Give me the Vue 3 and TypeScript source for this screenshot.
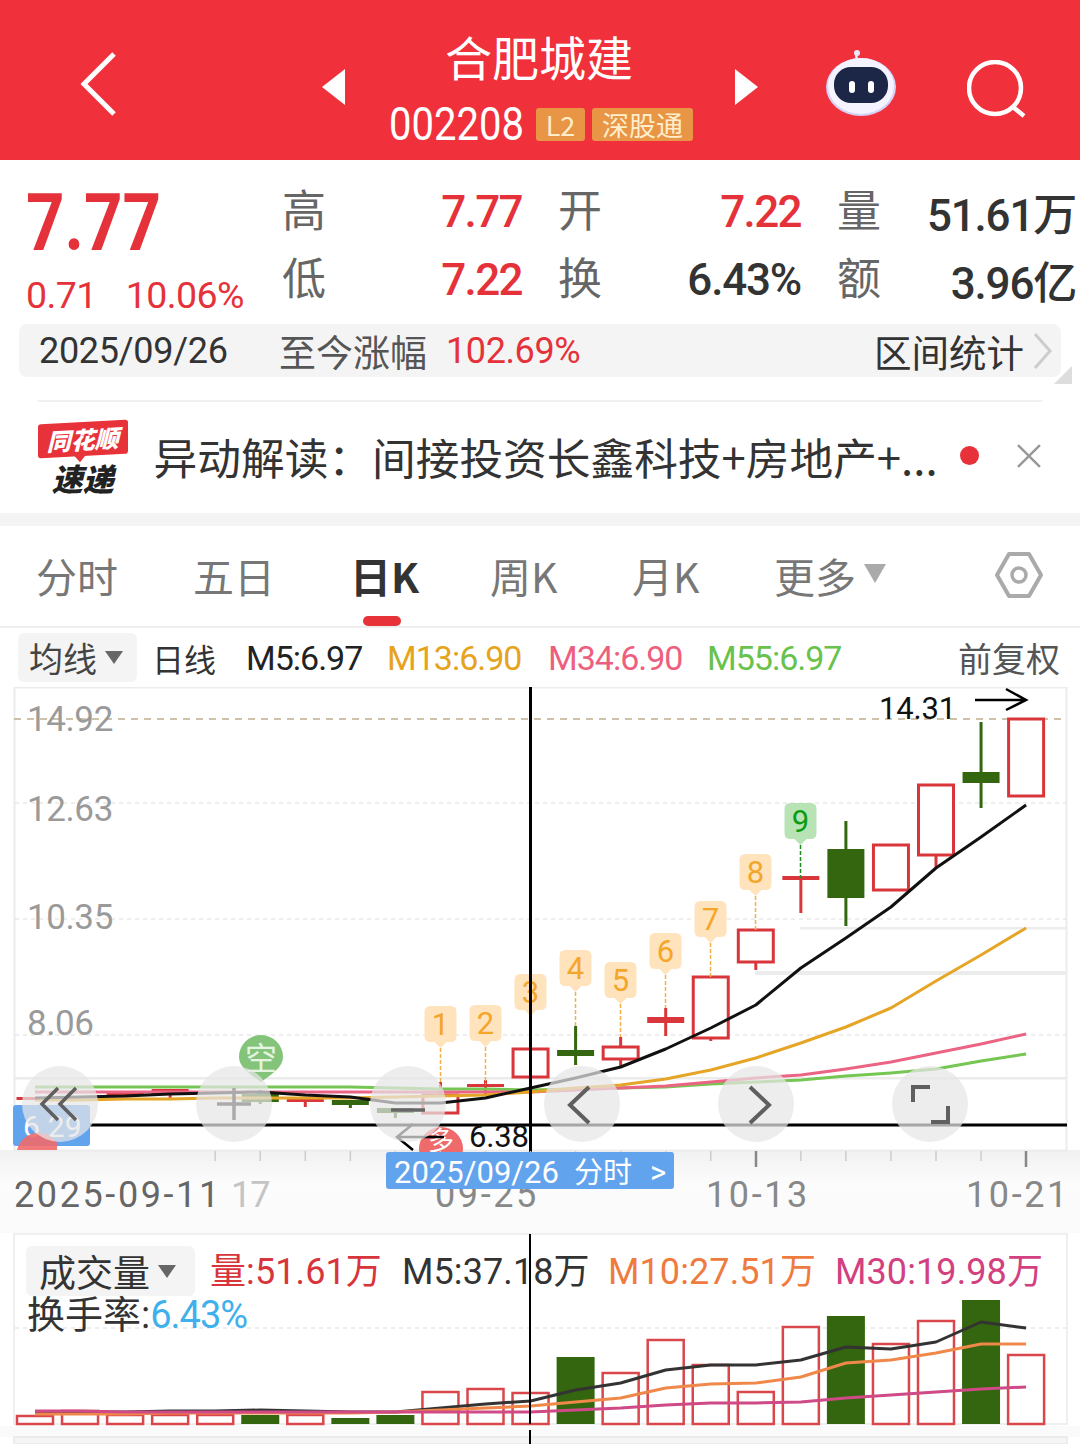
<template>
  <div class="page">
    <header class="top">
      <div class="top-left">
        <svg class="back" width="40" height="66" viewBox="0 0 40 66"><path d="M34 3 4 33l30 30" fill="none" stroke="#fff" stroke-width="5" /></svg>
        <span class="tri tri-left" />
      </div>
      <div class="top-title">
        <div class="name">合肥城建</div>
        <div class="code-row">
          <span class="code"><span class="code-num">002208</span></span>
          <span class="tag tag-l2">L2</span>
          <span class="tag tag-hk">深股通</span>
        </div>
      </div>
      <div class="top-right">
        <span class="tri tri-right" />
        <svg class="robot" width="72" height="68" viewBox="0 0 72 68">
          <path d="M33 14c-1-5-3-7-1-10" fill="none" stroke="#e9e6fb" stroke-width="2.5" />
          <circle cx="32" cy="4" r="3" fill="#e9e6fb" />
          <ellipse cx="36" cy="38" rx="35" ry="29" fill="#d4d2f6" />
          <ellipse cx="36" cy="37" rx="33" ry="28" fill="#f4f3ff" />
          <rect x="9" y="18" width="54" height="36" rx="17" fill="#1c2748" />
          <rect x="24" y="32" width="6" height="12" rx="3" fill="#fff" />
          <rect x="43" y="32" width="6" height="12" rx="3" fill="#fff" />
        </svg>
        <svg class="search" width="60" height="58" viewBox="0 0 60 58">
          <circle cx="28" cy="28" r="26" fill="none" stroke="#fff" stroke-width="4.5" />
          <path d="M46 47l11 9" fill="none" stroke="#fff" stroke-width="4.5" />
        </svg>
      </div>
    </header>

    <section class="quote">
      <div class="quote-main">
        <div class="price">7.77</div>
        <div class="change"><span>0.71</span><span>10.06%</span></div>
      </div>
      <div class="stats">
        <div v-for="s in stats" :key="s.label" class="stat">
          <span class="stat-label">{{ s.label }}</span>
          <span class="stat-value" :class="{ red: s.red }">{{ s.value }}</span>
        </div>
      </div>
    </section>

    <div class="range">
      <span class="range-date">2025/09/26</span>
      <span class="range-label">至今涨幅</span>
      <span class="range-pct">102.69%</span>
      <span class="range-link">区间统计</span>
      <svg width="20" height="38" viewBox="0 0 20 38"><path d="M2 2l15 17L2 36" fill="none" stroke="#ccc" stroke-width="3" /></svg>
      <span class="range-corner" />
    </div>

    <div class="news">
      <div class="logo">
        <div class="logo-top">同花顺</div>
        <div class="logo-bottom">速递</div>
      </div>
      <div class="news-text">异动解读：间接投资长鑫科技+房地产+...</div>
      <span class="news-dot" />
      <svg width="26" height="26" viewBox="0 0 26 26"><path d="M2 2l22 22M24 2 2 24" stroke="#999" stroke-width="2.5" /></svg>
    </div>

    <div class="gap" />

    <nav class="tabs">
      <span v-for="t in tabs" :key="t.label" class="tab" :class="{ active: t.active }" :style="{ width: t.width + 'px' }">{{ t.label }}</span>
      <span class="caret" />
      <svg class="hex" width="48" height="48" viewBox="0 0 48 48">
        <path d="M14 3h20l12 21-12 21H14L2 24z" fill="none" stroke="#aaa" stroke-width="4" stroke-linejoin="round" />
        <circle cx="24" cy="24" r="7" fill="none" stroke="#aaa" stroke-width="3.5" />
      </svg>
      <span class="tab-bar" />
    </nav>

    <div class="legend">
      <div class="legend-btn">均线<span class="small-caret" /></div>
      <span class="legend-day">日线</span>
      <span v-for="m in maLegend" :key="m.text" class="legend-ma" :style="{ color: m.color, width: m.width + 'px' }">{{ m.text }}</span>
      <span class="legend-adj">前复权</span>
    </div>

    <svg class="chart" width="1080" height="546" viewBox="0 687 1080 546">
      <defs>
        <linearGradient id="axisFade" x1="0" y1="0" x2="0" y2="1">
          <stop offset="0" stop-color="#f1f1f1" />
          <stop offset="0.4" stop-color="#fcfcfc" />
          <stop offset="1" stop-color="#fafafa" />
        </linearGradient>
      </defs>
      <rect x="0" y="1150" width="1080" height="83" fill="url(#axisFade)" />
      <rect x="14.5" y="687.5" width="1052" height="463" fill="#fff" stroke="#ececec" stroke-width="2" />

      <line x1="14" y1="719" x2="1066" y2="719" stroke="#bfae8c" stroke-width="1.5" stroke-dasharray="7 6" />
      <line v-for="y in [803, 919, 1035]" :key="y" x1="15" :y1="y" x2="1066" :y2="y" stroke="#ddd" stroke-width="1" stroke-dasharray="4 4" />
      <rect x="800" y="927" width="267" height="2.5" fill="#ececec" />
      <rect x="755" y="971" width="312" height="4" fill="#ececec" />
      <rect x="15" y="1077" width="1052" height="2.5" fill="#ececec" />

      <text v-for="a in priceAxis" :key="a.text" class="axis-price" x="27" :y="a.y">{{ a.text }}</text>

      <g v-for="c in candles" :key="c.i">
        <line :x1="cx(c.i)" :y1="c.wickTop" :x2="cx(c.i)" :y2="c.wickBottom" :stroke="candleColor(c)" stroke-width="3" />
        <rect v-if="c.hollow" :x="cx(c.i) - 17.5" :y="c.top" width="35" :height="c.bottom - c.top" fill="#fff" :stroke="candleColor(c)" stroke-width="3" />
        <rect v-else :x="cx(c.i) - 18.5" :y="c.top" width="37" :height="c.bottom - c.top" :fill="candleColor(c)" />
      </g>

      <polyline v-for="m in maLines" :key="m.color" :points="linePoints(m.points)" fill="none" :stroke="m.color" stroke-width="3" stroke-linejoin="round" />

      <g v-for="b in badges" :key="b.text">
        <line :x1="b.cx" :y1="b.y + 42" :x2="b.cx" :y2="b.stemTo" :stroke="b.green ? '#1f8a1f' : '#f2b04a'" stroke-width="1.5" stroke-dasharray="4 2" />
        <path :d="badgePath(b.cx, b.y)" :fill="b.green ? '#b8e3b4' : '#ffe3bd'" />
        <text class="badge-num" :x="b.cx" :y="b.y + 29" :fill="b.green ? '#0a9c12' : '#f4a62a'">{{ b.text }}</text>
      </g>

      <path d="M239 1057a22 22 0 1 1 44 0c0 10-11 17-22 25-11-8-22-15-22-25z" fill="#83c47a" />
      <text class="flag-text" x="261" y="1070">空</text>

      <rect x="13" y="1105" width="77" height="41" rx="3" fill="#62a3ee" />
      <text class="tag-price" x="23" y="1137">6.29</text>
      <path d="M17 1150a22 22 0 0 1 40 -7v7z" fill="#ef6a6a" opacity="0.9" />
      <circle cx="441" cy="1149" r="22" fill="#ef6a6a" />
      <text class="flag-text flag-small" x="441" y="1150">多</text>

      <line x1="90" y1="1125" x2="1067" y2="1125" stroke="#000" stroke-width="3" />
      <path d="M444 1137h-46m15-13-16 13 16 13" fill="none" stroke="#000" stroke-width="2.5" />
      <text class="hi-lo" x="469" y="1147">6.38</text>
      <text class="hi-lo" x="879" y="719">14.31</text>
      <path d="M975 700h50m-19-11 20 11-20 10" fill="none" stroke="#000" stroke-width="2.5" />

      <line x1="530.5" y1="687" x2="530.5" y2="1152" stroke="#000" stroke-width="3" />

      <g v-for="x in [60, 234, 408, 582, 756, 930]" :key="x">
        <circle :cx="x" cy="1104" r="38" fill="#e6e6e6" opacity="0.72" />
      </g>
      <g fill="none" stroke="#5f5f5f" stroke-width="3.5">
        <path d="M58 1088l-16 16 16 16M76 1088l-16 16 16 16" />
        <path d="M217 1104h34M234 1088v32" stroke="#aaa" />
        <path d="M391 1110h34" stroke="#666" />
        <path d="M589 1087l-19 18 19 18" stroke-width="4" />
        <path d="M750 1087l19 18-19 18" stroke-width="4" />
        <path d="M913 1102v-15h17M948 1106v16h-17" stroke-width="4" />
      </g>

      <line v-for="i in tickIdx" :key="i" :x1="cx(i)" y1="1151" :x2="cx(i)" y2="1161" stroke="#ccc" stroke-width="1.5" />
      <line v-for="x in [756, 1026]" :key="x" :x1="x" y1="1151" :x2="x" y2="1167" stroke="#888" stroke-width="2.5" />

      <text class="axis-date" x="14" y="1207" fill="#666">2025-09-11</text>
      <text class="axis-date axis-date-short" x="231" y="1207" fill="#c4c4c4">17</text>
      <text class="axis-date" x="435" y="1207" fill="#888">09-25</text>
      <text class="axis-date" x="706" y="1207" fill="#888">10-13</text>
      <text class="axis-date" x="966" y="1207" fill="#888">10-21</text>

      <rect x="386" y="1152" width="288" height="37" rx="3" fill="#62a3ee" />
      <text class="date-tag" x="394" y="1183">2025/09/26</text>
      <text class="date-tag date-tag-cn" x="574" y="1183">分时</text>
      <text class="date-tag" x="650" y="1183">&gt;</text>
    </svg>

    <section class="volume">
      <svg class="volume-chart" width="1080" height="211" viewBox="0 1233 1080 211">
        <rect x="14" y="1234" width="1053" height="190" fill="#fff" stroke="#efefef" stroke-width="2" />
        <rect x="0" y="1426" width="1080" height="11" fill="#fafafa" />
        <rect x="14" y="1437" width="1053" height="7" fill="#f5f5f5" stroke="#e8e8e8" stroke-width="1.5" />
        <line x1="15" y1="1328" x2="1066" y2="1328" stroke="#ddd" stroke-dasharray="4 4" />
        <template v-for="(b, i) in volBars" :key="i">
          <rect v-if="b.down" :x="cx(i) - 19" :y="b.top" width="38" :height="1424 - b.top" fill="#33660f" />
          <rect v-else :x="cx(i) - 18" :y="b.top" width="36" :height="1424 - b.top" fill="#fff" stroke="#d9474c" stroke-width="2.5" />
        </template>
        <polyline v-for="m in volLines" :key="m.color" :points="linePoints(m.points)" fill="none" :stroke="m.color" stroke-width="3" stroke-linejoin="round" />
        <line x1="530" y1="1234" x2="530" y2="1424" stroke="#000" stroke-width="2" />
        <line x1="530" y1="1430" x2="530" y2="1444" stroke="#000" stroke-width="2" />
      </svg>
      <div class="vol-btn">成交量<span class="small-caret" /></div>
      <div class="vol-legend">
        <span v-for="v in volLegend" :key="v.text" :style="{ color: v.color, width: v.width + 'px' }">{{ v.text }}</span>
      </div>
      <div class="turnover">换手率:<span>6.43%</span></div>
    </section>
  </div>
</template>

<script setup lang="ts">
interface Candle {
  i: number
  top: number
  bottom: number
  wickTop: number
  wickBottom: number
  down?: boolean
  hollow?: boolean
}

interface Badge {
  text: string
  cx: number
  y: number
  stemTo: number
  green?: boolean
}

const stats = [
  { label: '高', value: '7.77', red: true },
  { label: '开', value: '7.22', red: true },
  { label: '量', value: '51.61万' },
  { label: '低', value: '7.22', red: true },
  { label: '换', value: '6.43%' },
  { label: '额', value: '3.96亿' },
]

const tabs = [
  { label: '分时', width: 157 },
  { label: '五日', width: 157 },
  { label: '日K', width: 140, active: true },
  { label: '周K', width: 142 },
  { label: '月K', width: 142 },
  { label: '更多', width: 90 },
]

const maLegend = [
  { text: 'M5:6.97', color: '#222', width: 141 },
  { text: 'M13:6.90', color: '#e6a31c', width: 161 },
  { text: 'M34:6.90', color: '#ee5f7f', width: 159 },
  { text: 'M55:6.97', color: '#68c24c', width: 250 },
]

const volLegend = [
  { text: '量:51.61万', color: '#d8343c', width: 192 },
  { text: 'M5:37.18万', color: '#333', width: 206 },
  { text: 'M10:27.51万', color: '#ef7b3f', width: 227 },
  { text: 'M30:19.98万', color: '#d2407f', width: 206 },
]

const priceAxis = [
  { text: '14.92', y: 731 },
  { text: '12.63', y: 821 },
  { text: '10.35', y: 929 },
  { text: '8.06', y: 1035 },
]

const cx = (i: number) => 35 + i * 45.05

const candles: Candle[] = [
  { i: 0, top: 1097, bottom: 1100, wickTop: 1097, wickBottom: 1100 },
  { i: 2, top: 1092, bottom: 1095, wickTop: 1092, wickBottom: 1097 },
  { i: 3, top: 1089, bottom: 1095, wickTop: 1089, wickBottom: 1098 },
  { i: 5, top: 1094, bottom: 1102, wickTop: 1090, wickBottom: 1104, down: true },
  { i: 6, top: 1099, bottom: 1102, wickTop: 1099, wickBottom: 1107 },
  { i: 7, top: 1100, bottom: 1105, wickTop: 1100, wickBottom: 1108, down: true },
  { i: 8, top: 1108, bottom: 1113, wickTop: 1108, wickBottom: 1118, down: true },
  { i: 9, top: 1095, bottom: 1113, wickTop: 1082, wickBottom: 1113, hollow: true },
  { i: 10, top: 1084, bottom: 1087, wickTop: 1080, wickBottom: 1096 },
  { i: 11, top: 1049, bottom: 1077, wickTop: 1049, wickBottom: 1077, hollow: true },
  { i: 12, top: 1050, bottom: 1056, wickTop: 1026, wickBottom: 1065, down: true },
  { i: 13, top: 1047, bottom: 1059, wickTop: 1037, wickBottom: 1067, hollow: true },
  { i: 14, top: 1017, bottom: 1023, wickTop: 1008, wickBottom: 1036 },
  { i: 15, top: 977, bottom: 1038, wickTop: 977, wickBottom: 1041, hollow: true },
  { i: 16, top: 930, bottom: 962, wickTop: 930, wickBottom: 970, hollow: true },
  { i: 17, top: 876, bottom: 880, wickTop: 876, wickBottom: 913 },
  { i: 18, top: 849, bottom: 898, wickTop: 821, wickBottom: 926, down: true },
  { i: 19, top: 845, bottom: 890, wickTop: 845, wickBottom: 890, hollow: true },
  { i: 20, top: 785, bottom: 855, wickTop: 785, wickBottom: 868, hollow: true },
  { i: 21, top: 772, bottom: 783, wickTop: 722, wickBottom: 808, down: true },
  { i: 22, top: 719, bottom: 796, wickTop: 719, wickBottom: 796, hollow: true },
]

const candleColor = (c: Candle) => (c.down ? '#33660f' : '#d9363c')

const seq = (from: number, ys: number[]): [number, number][] => ys.map((y, n) => [cx(from + n), y])

const maLines = [
  { color: '#76c653', points: seq(0, [1087, 1087, 1087, 1087, 1087, 1087, 1087, 1087, 1088, 1089, 1089, 1090, 1089, 1088, 1087, 1084, 1082, 1080, 1076, 1073, 1069, 1061, 1054]) },
  { color: '#ec6483', points: seq(0, [1092, 1092, 1092, 1092, 1092, 1092, 1092, 1092, 1092, 1092, 1092, 1092, 1090, 1088, 1086, 1082, 1078, 1075, 1069, 1062, 1053, 1044, 1034]) },
  { color: '#e5a526', points: seq(0, [1100, 1100, 1099, 1099, 1098, 1098, 1098, 1098, 1097, 1096, 1095, 1092, 1088, 1085, 1079, 1070, 1058, 1043, 1027, 1008, 981, 955, 928]) },
  { color: '#111', points: seq(0, [1098, 1097, 1096, 1094, 1093, 1092, 1095, 1097, 1103, 1103, 1098, 1088, 1078, 1067, 1049, 1028, 1005, 968, 938, 907, 868, 837, 805]) },
]

const badges: Badge[] = [
  { text: '1', cx: 440.5, y: 1006, stemTo: 1084 },
  { text: '2', cx: 485.5, y: 1005, stemTo: 1084 },
  { text: '3', cx: 530.5, y: 974, stemTo: 1049 },
  { text: '4', cx: 575.5, y: 950, stemTo: 1026 },
  { text: '5', cx: 620.5, y: 962, stemTo: 1037 },
  { text: '6', cx: 665.5, y: 933, stemTo: 1008 },
  { text: '7', cx: 710.5, y: 901, stemTo: 977 },
  { text: '8', cx: 755.5, y: 854, stemTo: 930 },
  { text: '9', cx: 800.5, y: 803, stemTo: 878, green: true },
]

// rounded tag with a small pointer at the bottom, 32 wide and 42 tall
function badgePath(c: number, y: number) {
  const l = c - 16
  const r = c + 16
  return `M${l + 6} ${y}H${r - 6}Q${r} ${y} ${r} ${y + 6}V${y + 30}Q${r} ${y + 36} ${r - 6} ${y + 36}H${c + 6}L${c} ${y + 42}L${c - 6} ${y + 36}H${l + 6}Q${l} ${y + 36} ${l} ${y + 30}V${y + 6}Q${l} ${y} ${l + 6} ${y}Z`
}

const linePoints = (pts: [number, number][]) => pts.map((p) => p.join(',')).join(' ')

const tickIdx = Array.from({ length: 19 }, (_, n) => n + 4).filter((i) => i !== 16 && i !== 22)

const volTops = [1416, 1411, 1415, 1415, 1415, 1415, 1415, 1418, 1415, 1392, 1389, 1393, 1357, 1373, 1340, 1365, 1392, 1327, 1316, 1344, 1321, 1300, 1355]
const downBars = [5, 7, 8, 12, 18, 21]
const volBars = volTops.map((top, i) => ({ top, down: downBars.includes(i) }))

const volLines = [
  { color: '#333', points: seq(0, [1413, 1412, 1412, 1411, 1411, 1410, 1411, 1412, 1412, 1408, 1404, 1401, 1390, 1383, 1370, 1365, 1365, 1360, 1347, 1349, 1342, 1322, 1328]) },
  { color: '#f0884a', points: seq(0, [1414, 1414, 1414, 1413, 1413, 1413, 1413, 1413, 1412, 1410, 1408, 1406, 1402, 1398, 1388, 1384, 1383, 1377, 1363, 1360, 1353, 1344, 1344]) },
  { color: '#cf4a86', points: seq(0, [1411, 1411, 1412, 1412, 1412, 1412, 1412, 1412, 1412, 1412, 1412, 1412, 1410, 1408, 1405, 1403, 1403, 1402, 1398, 1395, 1392, 1389, 1387]) },
]
</script>

<style scoped>
.page {
  width: 1080px;
  height: 1444px;
  overflow: hidden;
  background: #fff;
  font-family: Roboto, "Noto Sans CJK SC", sans-serif;
  color: #333;
}

.top {
  display: grid;
  grid-template-columns: 389px 304px 387px;
  height: 160px;
  background: #f0303b;
  color: #fff;
}

.top-left {
  display: flex;
  align-items: center;
  justify-content: space-between;
  padding: 13px 44px 0 80px;
}

.back { margin-bottom: 5px; }

.tri {
  width: 0;
  height: 0;
  border-top: 18px solid transparent;
  border-bottom: 18px solid transparent;
}

.tri-left { border-right: 23px solid #fff; }
.tri-right { border-left: 23px solid #fff; }

.top-title {
  display: flex;
  flex-direction: column;
  align-items: center;
}

.name {
  margin-top: 27px;
  margin-right: 4px;
  font-size: 47px;
  line-height: 58px;
  font-family: "Noto Sans CJK SC", sans-serif;
}

.code-row {
  display: flex;
  align-items: center;
  width: 100%;
  height: 36px;
  margin-top: 21px;
}

.code {
  width: 147px;
  font-size: 46px;
}

/* the app's digits are narrower than Roboto */
.code-num {
  display: inline-block;
  transform: scaleX(0.87);
  transform-origin: left center;
}

.tag {
  height: 33px;
  border-radius: 3px;
  background: #e89546;
  color: #ffeecb;
  font-size: 27px;
  line-height: 33px;
  text-align: center;
  font-family: "Noto Sans CJK SC", sans-serif;
}

.tag-l2 { width: 49px; margin-right: 7px; }
.tag-hk { width: 101px; }

.top-right {
  display: flex;
  align-items: center;
  padding: 14px 0 0 42px;
}

.robot { margin-left: 67px; margin-bottom: 8px; }
.search { margin-left: 70px; margin-top: 4px; }

.quote {
  display: flex;
  height: 164px;
  padding-top: 18px;
  box-sizing: border-box;
}

.quote-main {
  width: 284px;
  padding-left: 26px;
  box-sizing: border-box;
  color: #e5323a;
}

.price {
  margin-top: 7px;
  font-size: 80px;
  line-height: 76px;
  font-weight: 700;
  transform: scaleX(0.84);
  transform-origin: left center;
}

.change {
  display: flex;
  gap: 29px;
  margin-top: 12px;
  font-size: 37.5px;
  line-height: 44px;
  letter-spacing: -0.6px;
}

.stats {
  display: grid;
  grid-template-columns: 238px 241px 237px;
  grid-auto-rows: 68px;
  column-gap: 38px;
}

.stat {
  display: flex;
  align-items: center;
  justify-content: space-between;
}

.stat-label {
  margin-bottom: 8px;
  margin-left: -2px;
  font-size: 44px;
  color: #666;
  font-family: "Noto Sans CJK SC", sans-serif;
}

.stat-value {
  font-size: 44px;
  font-weight: 500;
  letter-spacing: -1.2px;
  color: #333;
  white-space: nowrap;
}

.stat-value.red { color: #e5323a; letter-spacing: -1.6px; }

.range {
  position: relative;
  display: flex;
  align-items: center;
  width: 1042px;
  height: 53px;
  margin-left: 19px;
  padding: 0 8px 0 20px;
  box-sizing: border-box;
  border-radius: 8px;
  background: #f4f4f4;
}

.range-date {
  width: 240px;
  font-size: 36px;
  letter-spacing: -0.3px;
}

.range-label {
  width: 167px;
  font-size: 37px;
  color: #555;
  font-family: "Noto Sans CJK SC", sans-serif;
}

.range-pct {
  font-size: 36px;
  color: #e5323a;
  letter-spacing: -0.4px;
}

.range-link {
  margin-left: auto;
  margin-right: 9px;
  font-size: 37.5px;
  font-family: "Noto Sans CJK SC", sans-serif;
}

/* little fold under the bar's right end */
.range-corner {
  position: absolute;
  right: -11px;
  bottom: -7px;
  width: 0;
  height: 0;
  border-left: 18px solid transparent;
  border-bottom: 18px solid #ddd;
}

.news {
  display: flex;
  align-items: center;
  height: 113px;
  margin: 23px 38px 0;
  padding-bottom: 4px;
  border-top: 2px solid #f0f0f0;
  box-sizing: border-box;
}

.logo {
  width: 90px;
  margin-top: 4px;
  font-family: "Noto Sans CJK SC", sans-serif;
  font-style: italic;
  font-weight: 900;
  text-align: center;
}

.logo-top {
  position: relative;
  height: 34px;
  background: #e8323a;
  color: #fff;
  font-size: 24px;
  line-height: 34px;
  border-radius: 3px;
  transform: skewY(-3deg);
}

.logo-top::after {
  content: "";
  position: absolute;
  left: 36px;
  bottom: -6px;
  border-left: 6px solid transparent;
  border-right: 6px solid transparent;
  border-top: 7px solid #e8323a;
}

.logo-bottom {
  margin-top: 6px;
  color: #222;
  font-size: 31px;
  line-height: 32px;
}

.news-text {
  width: 789px;
  margin-left: 26px;
  font-size: 43.7px;
  line-height: 60px;
  white-space: nowrap;
  font-family: "Noto Sans CJK SC", sans-serif;
}

.news-dot {
  width: 19px;
  height: 19px;
  margin-left: 21px;
  border-radius: 50%;
  background: #e8323a;
}

.news svg { margin-left: 37px; }

.gap {
  height: 13px;
  background: #f4f4f4;
}

.tabs {
  position: relative;
  display: flex;
  align-items: center;
  height: 102px;
  padding-left: 36px;
  padding-bottom: 2px;
  box-sizing: border-box;
  border-bottom: 2px solid #eee;
}

.tab {
  font-size: 41px;
  color: #777;
  font-family: "Noto Sans CJK SC", sans-serif;
  white-space: nowrap;
}

.tab.active {
  color: #333;
  font-weight: 700;
}

.caret {
  width: 0;
  height: 0;
  border-left: 11px solid transparent;
  border-right: 11px solid transparent;
  border-top: 19px solid #aaa;
  margin-bottom: 4px;
}

.hex { margin-left: auto; margin-right: 37px; }

.tab-bar {
  position: absolute;
  left: 363px;
  bottom: 0;
  width: 38px;
  height: 10px;
  border-radius: 5px;
  background: #e8323a;
}

.legend {
  display: flex;
  align-items: center;
  height: 59px;
}

.legend-btn {
  display: flex;
  align-items: center;
  gap: 8px;
  width: 119px;
  height: 49px;
  margin-left: 18px;
  padding-left: 11px;
  box-sizing: border-box;
  border-radius: 6px;
  background: #f4f4f4;
  font-size: 34px;
  color: #444;
  font-family: "Noto Sans CJK SC", sans-serif;
}

.small-caret {
  width: 0;
  height: 0;
  border-left: 9px solid transparent;
  border-right: 9px solid transparent;
  border-top: 13px solid #666;
}

.legend-day {
  width: 94px;
  margin-left: 15px;
  font-size: 32px;
  font-family: "Noto Sans CJK SC", sans-serif;
}

.legend-ma {
  font-size: 34px;
  letter-spacing: -1px;
  white-space: nowrap;
}

.legend-adj {
  margin-left: auto;
  margin-right: 20px;
  font-size: 34px;
  color: #555;
  font-family: "Noto Sans CJK SC", sans-serif;
}

.chart,
.volume-chart {
  display: block;
}

.axis-price {
  font-size: 35px;
  fill: #9a9a9a;
  letter-spacing: -0.4px;
}

.badge-num {
  font-size: 31px;
  text-anchor: middle;
}

.flag-text {
  font-size: 32px;
  fill: #e4f4e1;
  text-anchor: middle;
  font-family: "Noto Sans CJK SC", sans-serif;
}

.flag-small {
  font-size: 26px;
  fill: #fff;
}

.tag-price {
  font-size: 30px;
  fill: #fff;
}

.hi-lo {
  font-size: 31px;
  fill: #111;
  letter-spacing: -0.2px;
}

.axis-date {
  font-size: 36px;
  letter-spacing: 2.6px;
}

.axis-date-short {
  letter-spacing: -1px;
}

.date-tag {
  font-size: 31px;
  fill: #fff;
  font-family: Roboto, "Noto Sans CJK SC", sans-serif;
}

.date-tag-cn {
  font-size: 29px;
}

.volume {
  position: relative;
  height: 211px;
}

.vol-btn {
  position: absolute;
  left: 26px;
  top: 13px;
  display: flex;
  align-items: center;
  gap: 8px;
  width: 169px;
  height: 50px;
  padding-left: 13px;
  box-sizing: border-box;
  border-radius: 6px;
  background: #f4f4f4;
  font-size: 37px;
  color: #333;
  font-family: "Noto Sans CJK SC", sans-serif;
}

.vol-legend {
  position: absolute;
  left: 210px;
  top: 16px;
  display: flex;
  font-size: 36px;
  line-height: 46px;
  white-space: nowrap;
  letter-spacing: 0.1px;
}

.turnover {
  position: absolute;
  left: 27px;
  top: 63px;
  font-size: 38px;
  line-height: 38px;
  color: #333;
  white-space: nowrap;
}

.turnover span {
  color: #3fb0ec;
  letter-spacing: -1px;
}

.red { color: #e5323a; }
</style>

<style>
html,
body {
  margin: 0;
  background: #fff;
}
</style>
